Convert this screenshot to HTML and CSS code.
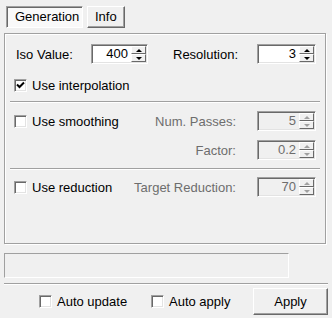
FILE: index.html
```html
<!DOCTYPE html>
<html lang="en">
<head>
    <meta charset="UTF-8">
    <title>Iso Surface</title>
    <link rel="stylesheet" href="styles.css">
</head>
<body>
    <div class="tabs">
        <div class="tab tab-active">Generation</div>
        <div class="tab">Info</div>
    </div>
    <div class="pane">
        <div class="row">
            <span class="lbl lbl-iso">Iso Value:</span>
            <div class="spin spin-iso"><span class="spin-val">400</span><span class="spin-btns"><i class="arr-up"></i><i class="arr-down"></i></span></div>
            <span class="lbl lbl-res">Resolution:</span>
            <div class="spin"><span class="spin-val">3</span><span class="spin-btns"><i class="arr-up"></i><i class="arr-down"></i></span></div>
        </div>
        <div class="row row-interp">
            <span class="check"><svg width="9" height="9" viewBox="0 0 9 9"><path d="M1 3.5 L3.5 6 L8 1.5" fill="none" stroke="#000" stroke-width="2"/></svg></span>
            <span class="check-text">Use interpolation</span>
        </div>
        <div class="sep"></div>
        <div class="row row-smooth">
            <span class="check"></span>
            <span class="check-text">Use smoothing</span>
            <span class="lbl lbl-right off">Num. Passes:</span>
            <div class="spin off"><span class="spin-val">5</span><span class="spin-btns"><i class="arr-up"></i><i class="arr-down"></i></span></div>
        </div>
        <div class="row row-factor">
            <span class="lbl lbl-right off">Factor:</span>
            <div class="spin off"><span class="spin-val">0.2</span><span class="spin-btns"><i class="arr-up"></i><i class="arr-down"></i></span></div>
        </div>
        <div class="sep sep-2"></div>
        <div class="row row-reduce">
            <span class="check"></span>
            <span class="check-text">Use reduction</span>
            <span class="lbl lbl-right off">Target Reduction:</span>
            <div class="spin off"><span class="spin-val">70</span><span class="spin-btns"><i class="arr-up"></i><i class="arr-down"></i></span></div>
        </div>
    </div>
    <div class="status"></div>
    <div class="bottom-sep"></div>
    <div class="bottom">
        <label class="auto auto-update"><span class="check"></span><span class="check-text">Auto update</span></label>
        <label class="auto auto-apply"><span class="check"></span><span class="check-text">Auto apply</span></label>
        <button class="apply">Apply</button>
    </div>
</body>
</html>
```

FILE: styles.css
```css
body {
    margin: 0;
    background: #f0f0f0;
    font-family: "Liberation Sans", Arial, sans-serif;
    font-size: 13px;
    color: #000;
    width: 332px;
    height: 318px;
    overflow: hidden;
}
.tabs {
    display: flex;
    gap: 4px;
    padding: 6px 0 0 6px;
    height: 22px;
}
.tab {
    box-sizing: border-box;
    height: 22px;
    line-height: 19px;
    padding: 0 7px;
    border-top: 1px solid #fff;
    border-left: 1px solid #fff;
    border-right: 1px solid #696969;
    border-bottom: 1px solid #696969;
    box-shadow: inset -1px -1px #a0a0a0;
}
.tab-active {
    width: 77px;
    background: #f9f9f9;
    border-top-color: #a0a0a0;
    border-left-color: #a0a0a0;
    border-right-color: #fff;
    border-bottom-color: #fff;
    box-shadow: inset 1px 1px #696969;
    padding-left: 8px;
}
.pane {
    box-sizing: border-box;
    margin: 5px 0 0 4px;
    width: 322px;
    height: 211px;
    padding: 10px 5px 0 5px;
    border: 1px solid #a0a0a0;
    box-shadow: inset 1px 1px #fff, 1px 1px #fff;
}
.row {
    display: flex;
    align-items: center;
    height: 20px;
    padding: 0 4px;
}
.lbl-iso {
    width: 75px;
    margin-left: 2px;
}
.lbl-res {
    width: 84px;
    margin-left: 25px;
}
.lbl-right {
    flex: 1;
    text-align: right;
    margin-right: 21px;
}
.off {
    color: #6d6d6d;
}
.row-interp {
    margin-top: 11px;
}
.row-smooth {
    margin-top: 8px;
}
.row-factor {
    margin-top: 9px;
}
.row-reduce {
    margin-top: 7px;
}
.sep {
    margin-top: 6px;
    border-top: 1px solid #a0a0a0;
    border-bottom: 1px solid #fff;
}
.sep-2 {
    margin-top: 8px;
}
.check {
    box-sizing: border-box;
    display: inline-flex;
    align-items: center;
    justify-content: center;
    width: 13px;
    height: 13px;
    flex-shrink: 0;
    background: #fff;
    border-top: 1px solid #a0a0a0;
    border-left: 1px solid #a0a0a0;
    border-right: 1px solid #fff;
    border-bottom: 1px solid #fff;
    box-shadow: inset 1px 1px #696969, inset -1px -1px #e3e3e3;
}
.check-text {
    margin-left: 5px;
}
.spin {
    box-sizing: border-box;
    display: flex;
    width: 59px;
    height: 20px;
    padding: 1px;
    background: #fff;
    border-top: 1px solid #a0a0a0;
    border-left: 1px solid #a0a0a0;
    border-right: 1px solid #fff;
    border-bottom: 1px solid #fff;
    box-shadow: inset 1px 1px #696969, inset -1px -1px #e3e3e3;
}
.spin-iso {
    width: 57px;
}
.spin.off {
    background: #f0f0f0;
}
.spin-val {
    flex: 1;
    text-align: right;
    line-height: 16px;
    padding-right: 3px;
}
.spin-btns {
    display: flex;
    flex-direction: column;
    width: 15px;
}
.spin-btns i {
    box-sizing: border-box;
    display: flex;
    align-items: center;
    justify-content: center;
    height: 8px;
    background: #f0f0f0;
    border-top: 1px solid #fff;
    border-left: 1px solid #fff;
    border-right: 1px solid #696969;
    border-bottom: 1px solid #696969;
}
.spin-btns i::after {
    content: "";
    width: 0;
    height: 0;
    border-left: 3px solid transparent;
    border-right: 3px solid transparent;
}
.arr-up::after {
    border-bottom: 3px solid #000;
}
.arr-down::after {
    border-top: 3px solid #000;
}
.off .arr-up::after {
    border-bottom-color: #a0a0a0;
}
.off .arr-down::after {
    border-top-color: #a0a0a0;
}
.status {
    box-sizing: border-box;
    margin: 9px 0 0 4px;
    width: 285px;
    height: 25px;
    border-top: 1px solid #a0a0a0;
    border-left: 1px solid #a0a0a0;
    border-right: 1px solid #fff;
    border-bottom: 1px solid #fff;
}
.bottom-sep {
    margin: 5px 0 0 4px;
    width: 324px;
    border-top: 1px solid #a0a0a0;
    border-bottom: 1px solid #fff;
}
.bottom {
    display: flex;
    align-items: center;
    padding: 3px 0 0 39px;
}
.auto {
    display: flex;
    align-items: center;
}
.auto-update {
    width: 112px;
}
.auto-apply {
    width: 102px;
}
.apply {
    box-sizing: border-box;
    width: 75px;
    height: 27px;
    font-family: inherit;
    font-size: 13px;
    color: #000;
    background: #f0f0f0;
    border-top: 1px solid #fff;
    border-left: 1px solid #fff;
    border-right: 1px solid #696969;
    border-bottom: 1px solid #696969;
    box-shadow: inset -1px -1px #a0a0a0;
    padding: 0;
}
```
